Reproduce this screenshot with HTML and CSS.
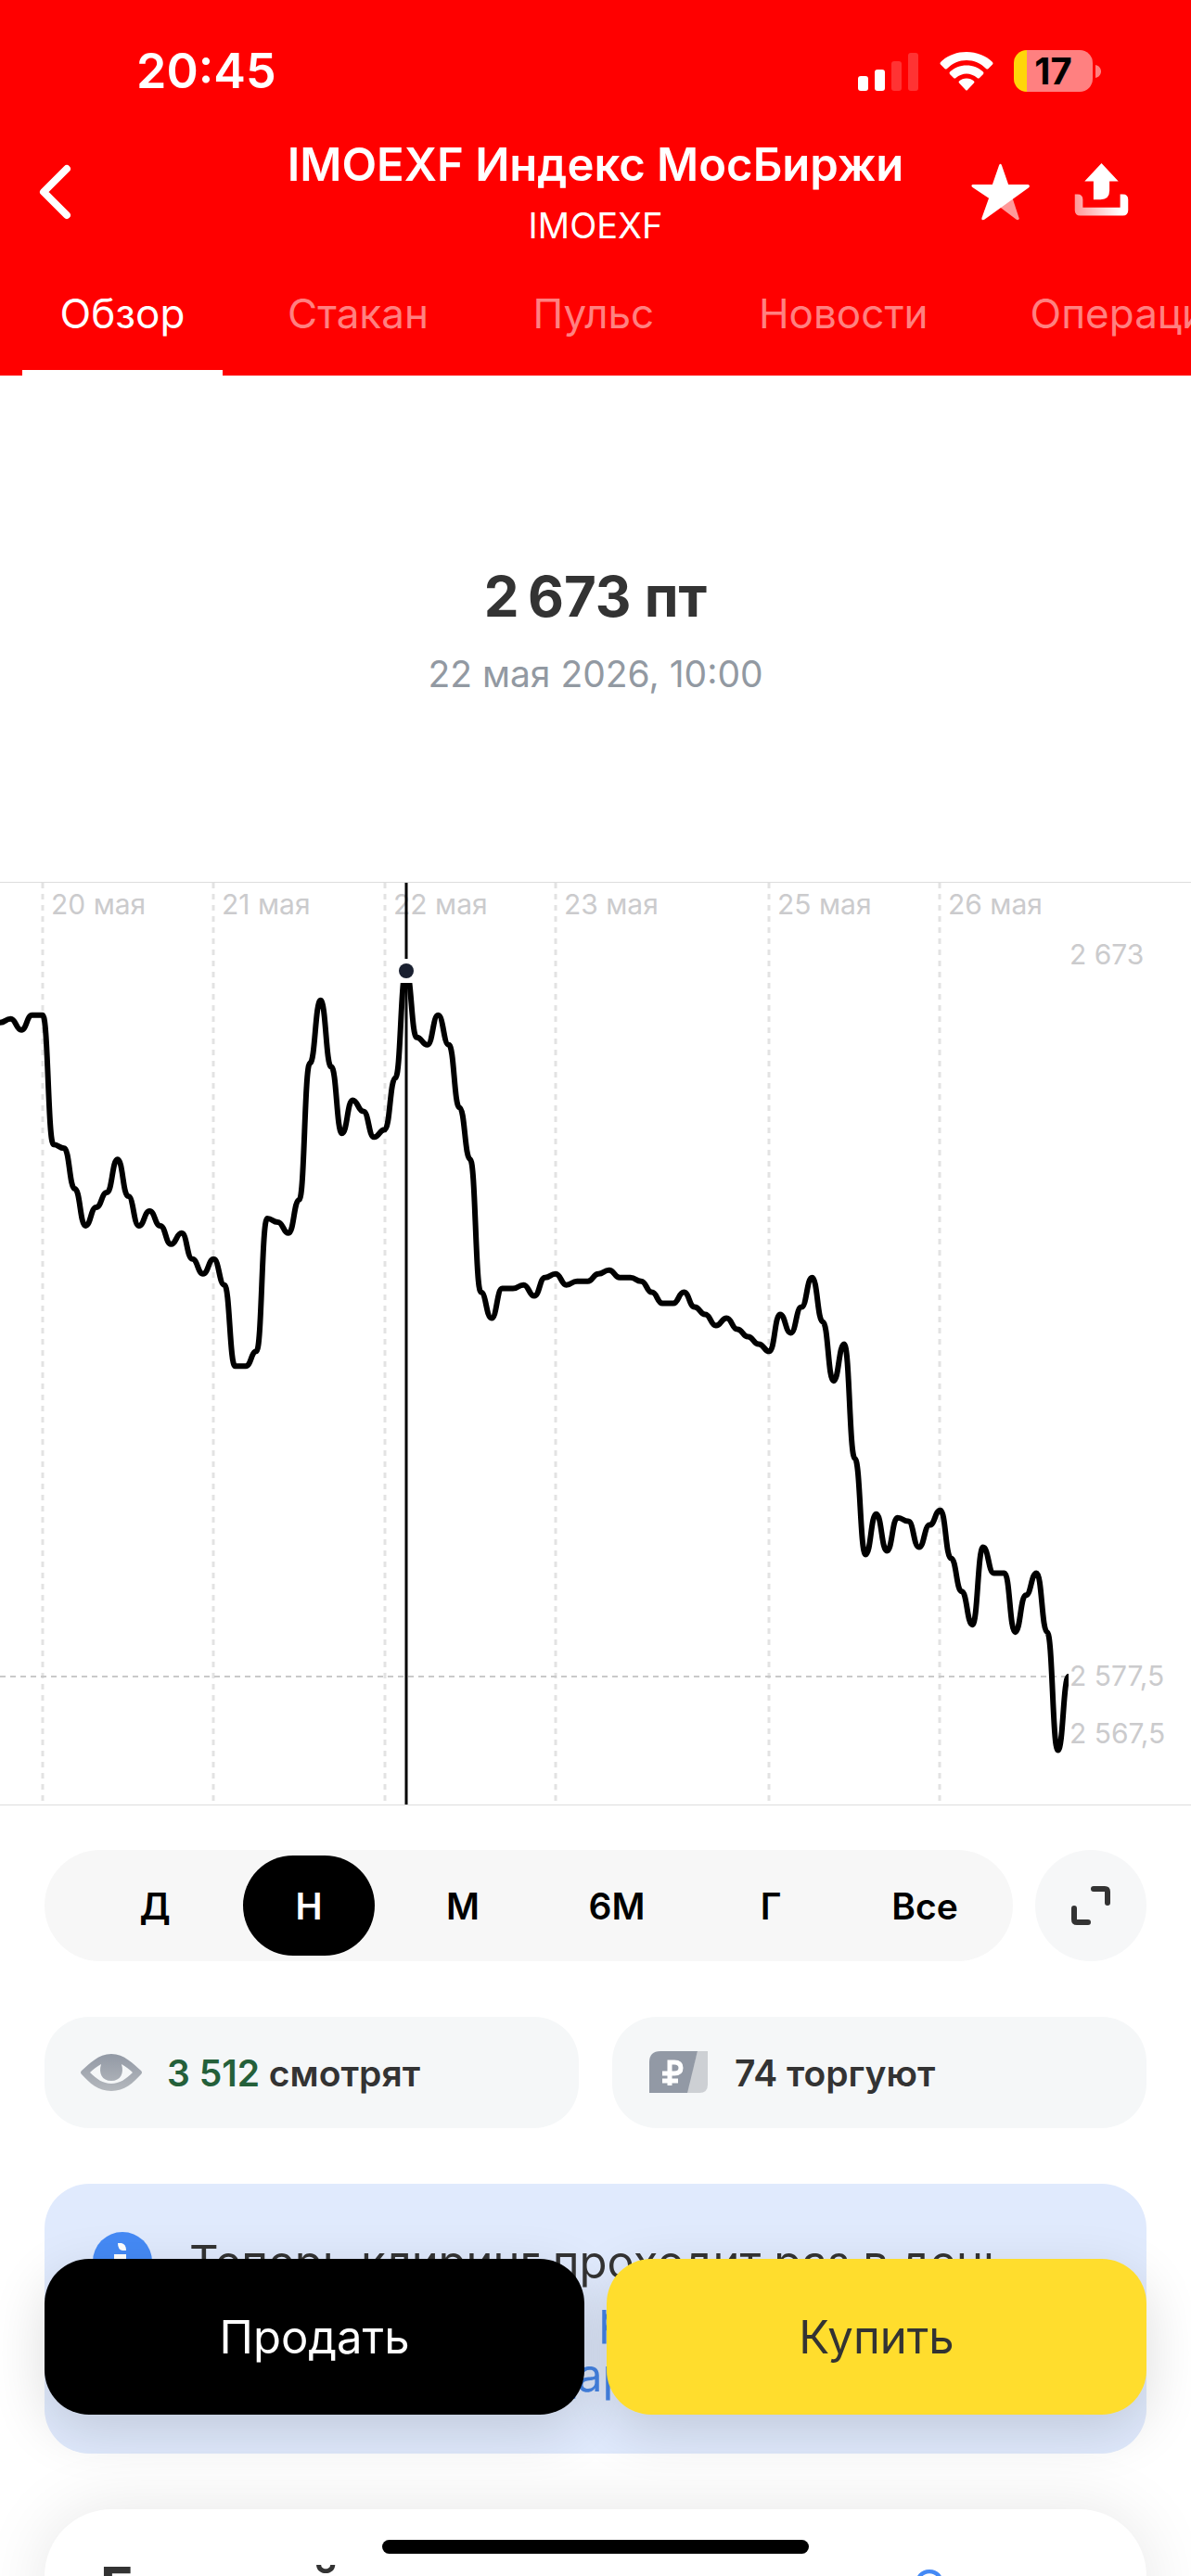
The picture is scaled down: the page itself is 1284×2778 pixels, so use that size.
FILE: index.html
```html
<!DOCTYPE html>
<html lang="ru">

<head>
    <meta charset="utf-8">
    <meta name="viewport" content="width=device-width, initial-scale=1">
    <title>IMOEXF Индекс МосБиржи</title>
    <link rel="stylesheet" href="styles.css">
</head>

<body>
    <header class="header">
        <div class="status-bar">
            <span class="status-time">20:45</span>
            <div class="status-icons">
                <svg class="signal" viewBox="0 0 66 42" aria-hidden="true">
                    <rect x="0" y="26" width="11" height="16" rx="3" />
                    <rect x="18" y="19" width="11" height="23" rx="3" />
                    <rect x="36" y="10" width="11" height="32" rx="3" opacity="0.2" />
                    <rect x="54" y="1" width="11" height="41" rx="3" opacity="0.2" />
                </svg>
                <svg class="wifi" viewBox="0 0 58 42" aria-hidden="true">
                    <path d="M29 0C40 0 50 4 57 11Q58 12.500 57 13.500L52.500 18Q51.500 19 50 18C44 12 37 9 29 9S14 12 8 18Q6.500 19 5.500 18L1 13.500Q0 12.500 1 11C8 4 18 0 29 0Z" />
                    <path d="M29 14.500C36 14.500 42 17 47 21.500Q48 22.500 47 24L43 28Q41.500 29 40.500 28C37 25 33 23.500 29 23.500S21 25 17.500 28Q16.500 29 15 28L11 24Q10 22.500 11 21.500C16 17 22 14.500 29 14.500Z" />
                    <path d="M29 28.500C32 28.500 35 29.500 37 31.500Q38 32.500 37 33.500L30 41Q29 42 28 41L21 33.500Q20 32.500 21 31.500C23 29.500 26 28.500 29 28.500Z" />
                </svg>
                <div class="battery">
                    <span class="battery-level">17</span>
                    <svg class="battery-tip" viewBox="0 0 6 14" aria-hidden="true">
                        <path d="M0 0C4 1 6 4 6 7S4 13 0 14Z" />
                    </svg>
                </div>
            </div>
        </div>

        <div class="title-bar">
            <button class="icon-button back" type="button" aria-label="Назад">
                <svg viewBox="0 0 72 72" aria-hidden="true">
                    <path d="M48 11L23 36L48 61" fill="none" stroke="#fff" stroke-width="8" stroke-linecap="round" stroke-linejoin="round" />
                </svg>
            </button>
            <div class="title">
                <h1>IMOEXF Индекс МосБиржи</h1>
                <p>IMOEXF</p>
            </div>
            <div class="title-actions">
                <button class="icon-button" type="button" aria-label="В избранное">
                    <svg viewBox="0 0 72 72" aria-hidden="true">
                        <path d="M36 42L49.500 42L57 65Q57 68 54 66.500L36 53Z" fill="#fff" opacity="0.6" />
                        <path d="M34.500 5.500Q36 2.500 37.500 5.500L45 27L67 27Q70 28 68 30.500L18 66.500Q14.500 68 15 65L23 42.500L5 30.500Q2 28 5 27L27 27Z" fill="#fff" />
                    </svg>
                </button>
                <button class="icon-button" type="button" aria-label="Поделиться">
                    <svg viewBox="0 0 72 72" aria-hidden="true">
                        <defs>
                            <linearGradient id="tray" x1="0" y1="0" x2="1" y2="0">
                                <stop offset="0" stop-color="#fff" stop-opacity="0.6" />
                                <stop offset="0.85" stop-color="#fff" />
                            </linearGradient>
                        </defs>
                        <path d="M36 3L55 23.500H45V34Q45 44 35 44H27V23.500H17Z" fill="#fff" />
                        <path d="M6 38H9Q15 38 15 44V53H57V38H60Q66 38 66 44V56Q66 62 60 62H12Q6 62 6 56Z" fill="url(#tray)" />
                    </svg>
                </button>
            </div>
        </div>

        <nav class="tabs">
            <a class="tab active" href="#overview">Обзор</a>
            <a class="tab" href="#book">Стакан</a>
            <a class="tab" href="#pulse">Пульс</a>
            <a class="tab" href="#news">Новости</a>
            <a class="tab" href="#operations">Операции</a>
        </nav>
    </header>

    <section class="quote">
        <p class="quote-price">2&#8239;673 пт</p>
        <p class="quote-date">22 мая 2026, 10:00</p>
    </section>

    <svg class="chart" viewBox="0 0 1284 994" role="img" aria-label="График цены за неделю">
        <g class="chart-grid">
            <path d="M46 0V994M230 0V994M415 0V994M599 0V994M829 0V994M1013 0V994" />
        </g>
        <path class="chart-current" d="M0 856H1148" />
        <g class="chart-labels">
            <text x="55" y="34">20 мая</text>
            <text x="239" y="34">21 мая</text>
            <text x="424" y="34">22 мая</text>
            <text x="608" y="34">23 мая</text>
            <text x="838" y="34">25 мая</text>
            <text x="1022" y="34">26 мая</text>
            <text x="1153" y="88">2 673</text>
            <text x="1153" y="866">2 577,5</text>
            <text x="1153" y="928">2 567,5</text>
        </g>
        <clipPath id="plot">
            <rect x="0" y="0" width="1152" height="994" />
        </clipPath>
        <path class="chart-line" clip-path="url(#plot)" />
        <path class="chart-cursor" d="M438 0V994" />
        <rect x="428" y="82" width="20" height="26" fill="#fff" />
        <circle cx="438" cy="95" r="13" fill="#fff" />
        <circle cx="438" cy="95" r="8" fill="#1a2030" />
    </svg>

    <main class="content">
        <div class="period-row">
            <div class="periods">
                <button class="period" type="button">Д</button>
                <button class="period active" type="button">Н</button>
                <button class="period" type="button">М</button>
                <button class="period" type="button">6М</button>
                <button class="period" type="button">Г</button>
                <button class="period" type="button">Все</button>
            </div>
            <button class="expand" type="button" aria-label="На весь экран">
                <svg viewBox="0 0 42 42" aria-hidden="true">
                    <path d="M24 3H36Q39 3 39 6V18M3 24V36Q3 39 6 39H18" />
                </svg>
            </button>
        </div>

        <div class="stats">
            <div class="stat">
                <svg viewBox="0 0 72 48" aria-hidden="true">
                    <defs>
                        <linearGradient id="eye" x1="0" y1="0" x2="0" y2="1">
                            <stop offset="0" stop-color="#9299a5" />
                            <stop offset="1" stop-color="#b4b8bd" />
                        </linearGradient>
                    </defs>
                    <path fill="url(#eye)" fill-rule="evenodd" d="M36 4C50 4 60 15 68 22Q70 24 68 26C60 35 50 44 36 44S12 35 4 26Q2 24 4 22C12 15 22 4 36 4ZM25 15C20 18 16 21 13 24C20 31 27 36 36 36S52 31 59 24C56 21 52 18 47 15C50 25 46 33 36 33S22 25 25 15Z" />
                </svg>
                <span><span class="up">3&nbsp;512</span> смотрят</span>
            </div>
            <div class="stat">
                <svg viewBox="0 0 72 48" aria-hidden="true">
                    <path d="M56 1H67V37Q67 46 58 46H44Z" fill="#cdd0d4" />
                    <path d="M4 46V13Q4 1 16 1H56L45 46Z" fill="#9299a5" />
                    <path d="M26 38V13H31Q38 13 38 19T31 25H18M18 33H35" fill="none" stroke="#fff" stroke-width="5" />
                </svg>
                <span>74 торгуют</span>
            </div>
        </div>

        <div class="notice">
            <svg viewBox="0 0 72 72" aria-hidden="true">
                <circle cx="36" cy="36" r="32" fill="#458af5" />
                <path d="M31 16H35Q40 17 40 24H36Q31 23 31 16ZM27 28H40V54H32V35H27Z" fill="#fff" />
            </svg>
            <p>
                Теперь клиринг проходит раз в день.<br>
                Сроки торгов — в <a href="#schedule">расписании сессий<br>
                и важном календаре</a>
            </p>
        </div>

        <section class="card">
            <h2>Базовый актив</h2>
            <a href="#asset">Открыть</a>
        </section>
    </main>

    <div class="trade-bar">
        <button class="trade sell" type="button">Продать</button>
        <button class="trade buy" type="button">Купить</button>
    </div>
    <div class="home-indicator"></div>

    <script src="chart.js"></script>
</body>

</html>
```
FILE: styles.css
```css
* {
    box-sizing: border-box;
}

body {
    margin: 0;
    height: 100vh;
    overflow: hidden;
    background: #fff;
    color: #333;
    font-family: Inter, "Open Sans", sans-serif;
}

h1,
h2,
p {
    margin: 0;
}

a {
    text-decoration: none;
}

button {
    border: none;
    padding: 0;
    background: none;
    color: inherit;
    font-family: inherit;
}

svg {
    display: block;
}

/* header */

.header {
    background: #f00;
    color: #fff;
}

.status-bar {
    display: flex;
    align-items: center;
    justify-content: space-between;
    height: 148px;
    padding: 5px 97px 0 147px;
}

.status-time {
    font-size: 52px;
    font-weight: 600;
}

.status-icons {
    display: flex;
    align-items: center;
    gap: 22px;
}

.signal {
    width: 66px;
    height: 42px;
    fill: #fff;
}

.wifi {
    width: 58px;
    height: 42px;
    fill: #fff;
}

.battery {
    display: flex;
    align-items: center;
    gap: 3px;
}

.battery-level {
    width: 85px;
    border-radius: 14px;
    background: linear-gradient(to right, #ffd60a 14px, #ff8080 14px);
    color: #000;
    font-size: 40px;
    font-weight: 700;
    line-height: 45px;
    text-align: center;
}

.battery-tip {
    width: 6px;
    height: 14px;
    fill: #ff8080;
}

.title-bar {
    display: grid;
    grid-template-columns: 240px 1fr 240px;
    align-items: center;
}

.icon-button {
    width: 72px;
    height: 72px;
    margin-bottom: 12px;
}

.back {
    margin-left: 24px;
}

.title {
    text-align: center;
    white-space: nowrap;
}

.title h1 {
    font-size: 49px;
    font-weight: 600;
    line-height: 60px;
}

.title p {
    font-size: 38px;
    line-height: 70px;
}

.title-actions {
    display: flex;
    justify-content: flex-end;
    gap: 40px;
    padding-right: 62px;
}

.tabs {
    display: flex;
    gap: 30px;
    padding-left: 24px;
    overflow: hidden;
}

.tab {
    flex-shrink: 0;
    min-width: 216px;
    padding: 0 40px;
    border-bottom: 6px solid transparent;
    color: #ff8080;
    font-size: 44px;
    line-height: 121px;
    text-align: center;
}

.tab.active {
    border-color: #fff;
    color: #fff;
}

/* price and chart */

.quote {
    display: flex;
    flex-direction: column;
    align-items: center;
    justify-content: center;
    gap: 14px;
    height: 546px;
    padding-top: 4px;
}

.quote-price {
    font-size: 60px;
    font-weight: 700;
    line-height: 80px;
}

.quote-date {
    color: #9299a2;
    font-size: 39px;
    line-height: 60px;
}

.chart {
    width: 100%;
    border-top: 1px solid #ddd;
    border-bottom: 1px solid #ddd;
}

.chart-grid {
    stroke: #e3e3e3;
    stroke-width: 3;
    stroke-dasharray: 6;
}

.chart-current {
    stroke: #c9c9c9;
    stroke-width: 2;
    stroke-dasharray: 6 5;
}

.chart-labels {
    fill: #cbcbcd;
    font-size: 30px;
}

.chart-line {
    fill: none;
    stroke: #000;
    stroke-width: 6;
}

.chart-cursor {
    stroke: #000;
    stroke-width: 3;
}

/* content below the chart */

.content {
    display: flex;
    flex-direction: column;
    gap: 60px;
    padding: 48px 48px 0;
}

.period-row {
    display: flex;
    gap: 24px;
}

.periods {
    display: flex;
    flex: 1;
    gap: 24px;
    padding: 6px 24px 6px 48px;
    border-radius: 60px;
    background: #f7f7f7;
}

.period {
    flex: 1 1 0;
    height: 108px;
    border-radius: 54px;
    color: #000;
    font-size: 39px;
    font-weight: 600;
}

.period.active {
    background: #000;
    color: #fff;
}

.expand {
    display: flex;
    align-items: center;
    justify-content: center;
    width: 120px;
    height: 120px;
    border-radius: 50%;
    background: #f6f7f8;
}

.expand svg {
    width: 42px;
    height: 42px;
    fill: none;
    stroke: #333;
    stroke-width: 6;
    stroke-linecap: round;
}

.stats {
    display: grid;
    grid-template-columns: 1fr 1fr;
    gap: 36px;
}

.stat {
    display: flex;
    align-items: center;
    gap: 24px;
    height: 120px;
    padding: 0 36px;
    border-radius: 48px;
    background: #f5f7f8;
    font-size: 39px;
    font-weight: 600;
}

.stat svg {
    width: 72px;
    height: 48px;
}

.up {
    color: #24603a;
}

.notice {
    display: flex;
    gap: 36px;
    padding: 48px;
    border-radius: 48px;
    background: #e0eafd;
}

.notice svg {
    flex: none;
    width: 72px;
    height: 72px;
}

.notice p {
    padding: 6px 0;
    font-size: 49px;
    line-height: 61px;
    white-space: nowrap;
}

.notice a {
    color: #4585e8;
}

.card {
    display: flex;
    align-items: flex-start;
    justify-content: space-between;
    padding: 48px 48px 48px 60px;
    border-radius: 72px;
    background: #fff;
    box-shadow: 0 0 72px rgba(0, 0, 0, 0.1);
    line-height: 72px;
}

.card h2 {
    font-size: 60px;
    font-weight: 700;
}

.card a {
    color: #458af5;
    font-size: 49px;
}

/* fixed at the bottom, over the scrolled content */

.trade-bar {
    position: fixed;
    right: 48px;
    bottom: 174px;
    left: 48px;
    display: flex;
    gap: 24px;
}

.trade {
    flex: 1;
    height: 168px;
    border-radius: 48px;
    font-size: 49px;
    box-shadow: 0 18px 60px rgba(0, 0, 0, 0.14);
}

.sell {
    background: #000;
    color: #fff;
}

.buy {
    background: #ffdd2d;
    color: #333;
}

.home-indicator {
    position: fixed;
    bottom: 24px;
    left: 50%;
    width: 460px;
    height: 15px;
    margin-left: -230px;
    border-radius: 8px;
    background: #000;
}
```
FILE: chart.js
```js
// hourly closes, in ticks (0.5 pt) below the weekly high of 2 673
const ticks = [
    14, 13, 16, 12,
    12, 47, 48, 59, 69, 64, 60, 51, 61, 69, 65, 69, 74, 71, 78, 82,
    78, 85, 107, 107, 103, 67, 68, 71, 62, 25, 8, 26, 44, 35, 38, 45,
    43, 29, 0, 18, 20, 12, 20, 37, 51, 87, 94, 86, 86, 85, 88, 83,
    82, 85, 84, 84, 82, 81, 83, 83, 84, 87, 90, 90, 87, 91, 93, 96, 94, 97, 99, 101,
    103, 93, 98, 91, 83, 95, 111, 101, 132, 158, 147, 157, 148, 149, 156, 150,
    146, 159, 168, 177, 156, 163, 163, 179, 169, 163, 179, 211, 191
];

const step = 1152 / 100;
const highY = 95;
const tickHeight = 3.984;

function buildPath(values) {
    let d = "";
    values.forEach((value, i) => {
        const x = i * step;
        const y = highY + value * tickHeight;
        if (i === 0) {
            d = `M${x} ${y}`;
        } else {
            const prevY = highY + values[i - 1] * tickHeight;
            const mid = x - step / 2;
            d += `C${mid} ${prevY} ${mid} ${y} ${x} ${y}`;
        }
    });
    return d;
}

document.querySelector(".chart-line").setAttribute("d", buildPath(ticks));
```
